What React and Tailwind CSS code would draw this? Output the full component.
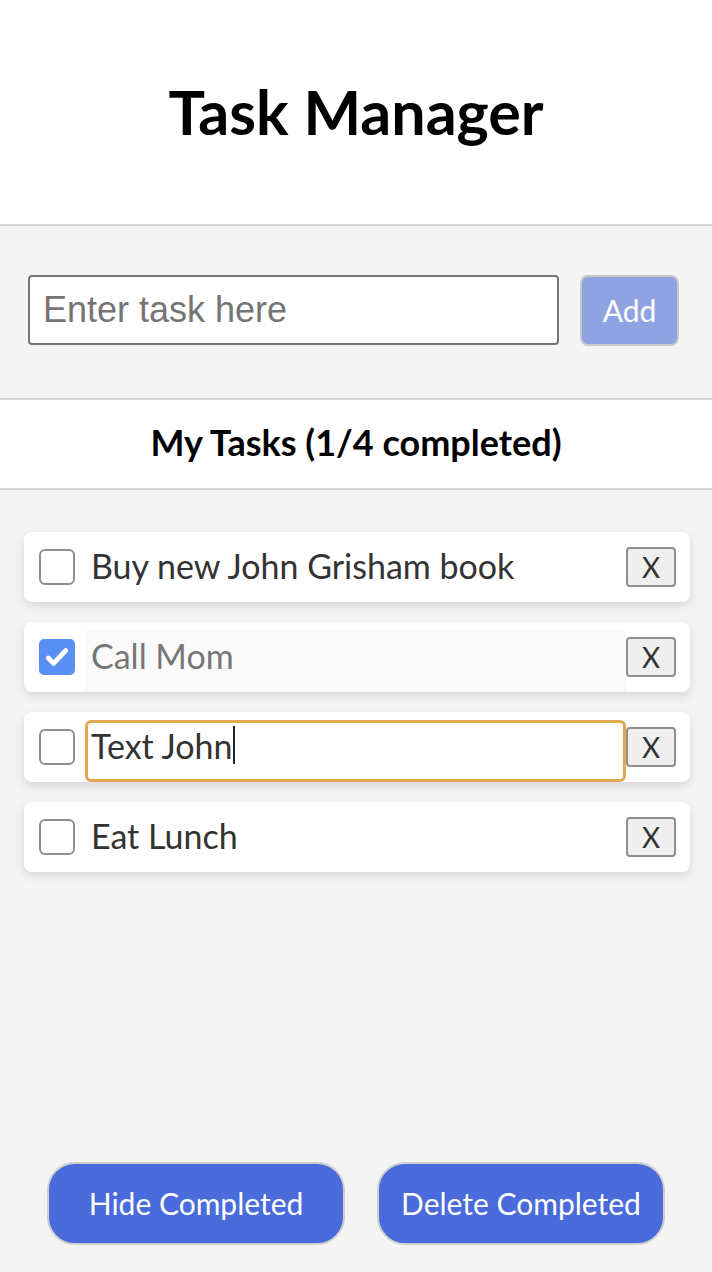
import { useState } from 'react';

const tasksInit = [
  { id: 1, text: 'Buy new John Grisham book', done: false },
  { id: 2, text: 'Call Mom', done: true },
  { id: 3, text: 'Text John', done: false, focused: true },
  { id: 4, text: 'Eat Lunch', done: false },
];

function Check({ checked }) {
  if (checked) {
    return (
      <span className="flex h-[36px] w-[36px] shrink-0 items-center justify-center rounded-[5px] bg-[#5a8ff6]">
        <svg width="30" height="30" viewBox="0 0 24 24" fill="none">
          <path d="M5 12.8l4.3 4.3L19 6.8" stroke="#fff" strokeWidth="3.8" strokeLinecap="round" strokeLinejoin="round" />
        </svg>
      </span>
    );
  }
  return <span className="h-[36px] w-[36px] shrink-0 rounded-[6px] border-2 border-[#8f8f8f] bg-white" />;
}

function TaskRow({ task }) {
  let inputCls = 'border-0 bg-transparent text-[#333]';
  if (task.done) inputCls = 'border-0 bg-[#fafafa] text-[#777]';
  if (task.focused) inputCls = 'border-[3px] border-[#e0a94f] rounded-[6px] bg-white text-[#333]';
  return (
    <div className="flex h-[70px] items-center rounded-[8px] bg-white pl-[15px] pr-[14px] shadow-[0_4px_10px_rgba(0,0,0,0.12)]">
      <Check checked={task.done} />
      <div className={`ml-[10px] mt-2 flex h-[62px] flex-1 items-center pb-3 pl-[6px] text-[34px] ${inputCls}`}>
        <span className={task.focused ? '-ml-[3px]' : ''}>{task.text}</span>
        {task.focused && <span className="ml-[1px] h-[38px] w-[2px] bg-[#222]" />}
      </div>
      <button className="flex h-[40px] w-[50px] shrink-0 items-center justify-center rounded-[4px] border-2 border-[#8f8f8f] bg-[#efefef] text-[28px] leading-none text-[#333]">
        X
      </button>
    </div>
  );
}

export default function App() {
  const [tasks] = useState(tasksInit);
  const done = tasks.filter((t) => t.done).length;

  return (
    <div className="flex min-h-[1272px] flex-col bg-[#f4f4f4] font-['Lato','Noto_Sans',sans-serif]">
      {/* Header */}
      <header className="flex h-[226px] items-center justify-center border-b-2 border-[#d6d6d6] bg-white">
        <h1 className="text-[61px] font-bold text-black">Task Manager</h1>
      </header>

      {/* New task */}
      <div className="flex h-[174px] items-center gap-[21px] border-b-2 border-[#d6d6d6] pl-[28px] pr-[33px] pb-[4px]">
        <input
          placeholder="Enter task here"
          className="h-[70px] min-w-0 flex-1 rounded-[4px] border-2 border-[#767676] bg-white px-[13px] font-['Liberation_Sans',Arial,sans-serif] text-[36px] placeholder:text-[#757575] outline-none"
        />
        <button className="h-[71px] w-[99px] rounded-[8px] border-2 border-[#c8c8c8] bg-[#8fa3e3] text-[30px] text-white">
          Add
        </button>
      </div>

      {/* Count */}
      <div className="flex h-[90px] items-center justify-center border-b-2 border-[#d6d6d6] bg-white pb-1">
        <h2 className="text-[36px] font-bold text-black">
          My Tasks ({done}/{tasks.length} completed)
        </h2>
      </div>

      {/* List */}
      <div className="flex flex-1 flex-col gap-[20px] pl-[24px] pr-[22px] pt-[42px]">
        {tasks.map((t) => (
          <TaskRow key={t.id} task={t} />
        ))}
      </div>

      {/* Footer actions */}
      <div className="flex justify-center gap-[32px] pb-[27px]">
        <button className="h-[83px] w-[298px] rounded-[28px] border-2 border-[#d0d0d0] bg-[#4a6bdb] text-[30px] text-white">
          Hide Completed
        </button>
        <button className="h-[83px] w-[288px] rounded-[28px] border-2 border-[#d0d0d0] bg-[#4a6bdb] text-[30px] text-white">
          Delete Completed
        </button>
      </div>
    </div>
  );
}
